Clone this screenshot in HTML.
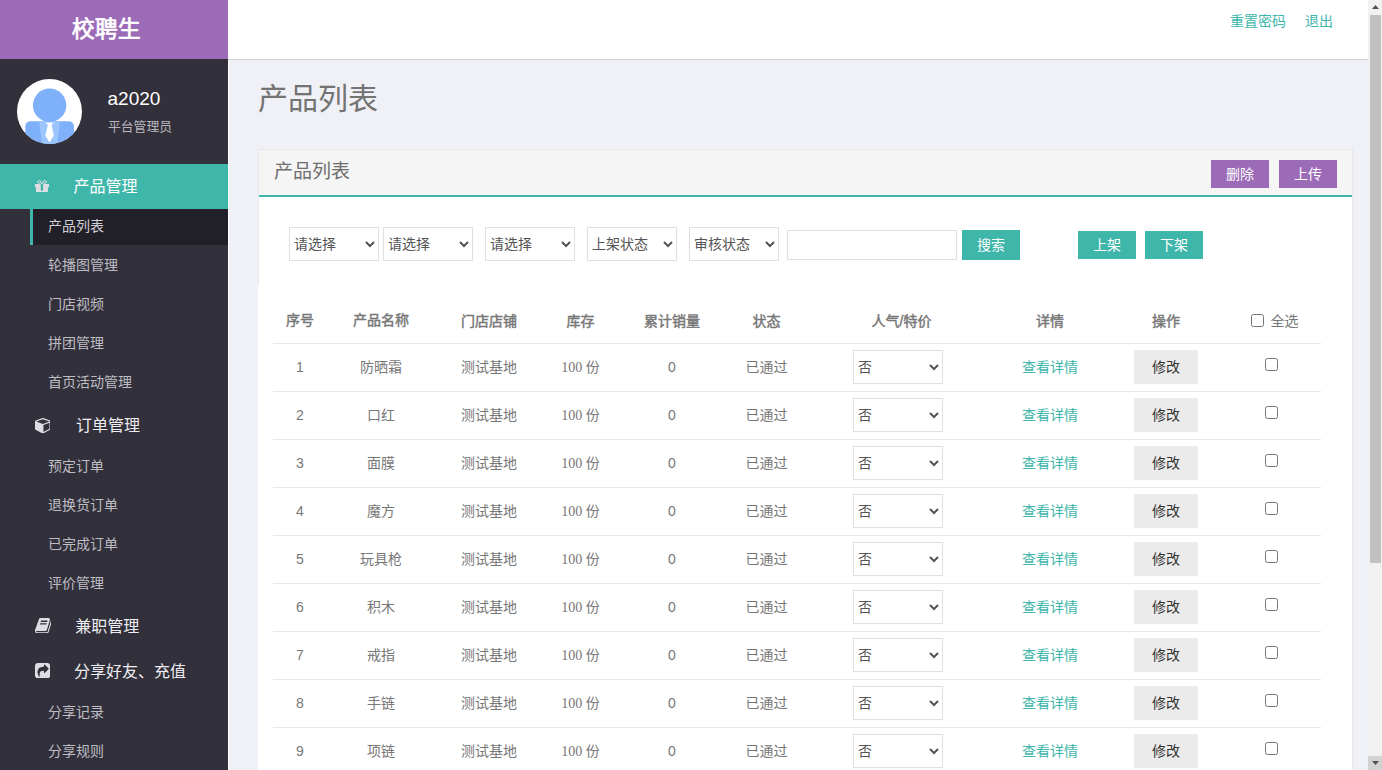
<!DOCTYPE html>
<html lang="zh-CN">
<head>
<meta charset="utf-8">
<title>产品列表</title>
<style>
*{box-sizing:border-box;}
html,body{margin:0;padding:0;width:1382px;height:770px;overflow:hidden;}
body{font-family:"Liberation Sans","Noto Sans CJK SC",sans-serif;font-size:14px;color:#777;background:#f0f1f6;position:relative;}
a{text-decoration:none;color:#3eb6aa;}
select,input{font-family:"Liberation Sans","Noto Sans CJK SC",sans-serif;}
/* sidebar */
#side{position:absolute;left:0;top:0;width:228px;height:770px;background:#32303a;overflow:hidden;}
#logo{height:59px;background:#9b6bb7;color:#fff;font-size:23px;font-weight:normal;-webkit-text-stroke:0.68px #fff;text-align:center;line-height:59px;padding-right:15.4px;}
#user{position:relative;height:105px;}
#avatar{position:absolute;left:17px;top:20px;width:65px;height:65px;}
#uname{position:absolute;left:107.5px;top:29px;font-size:19px;color:#fff;line-height:22px;}
#urole{position:absolute;left:108px;top:60px;font-size:12.8px;color:#b9b8bd;line-height:16px;}
.m1{height:45px;line-height:45px;color:#ededf1;font-size:16px;position:relative;padding-left:73.5px;}
.m1.act{background:#3eb6aa;line-height:45px;color:#fff;}
.m1 .ic{position:absolute;fill:#dedde3;}
.m2{height:36px;line-height:36px;margin-bottom:3px;color:#bebdc4;font-size:14px;padding-left:48px;position:relative;}
.m2.act{background:#211f27;margin-left:30px;padding-left:15px;border-left:3px solid #3eb6aa;color:#cfcfd5;line-height:34px;margin-bottom:2px;}
/* top */
#top{position:absolute;left:228px;top:0;width:1140px;height:60px;background:#fff;border-bottom:1px solid #d2d2d4;}
#top a{position:absolute;top:12px;font-size:14px;line-height:18px;}
/* main */
#title{position:absolute;left:258px;top:77px;font-size:30px;line-height:44px;color:#737373;font-weight:400;}
#panel{position:absolute;left:258px;top:149px;width:1095px;height:640px;background:#fff;border-right:1px solid #e7e7e9;}
#pbl{position:absolute;left:0;top:0;width:1px;height:136px;background:#e7e7e9;}
#phead{height:48px;background:#f5f5f5;border-top:1px solid #e7e7e9;border-bottom:2px solid #3eb6aa;position:relative;margin-left:1px;}
#phead .t{position:absolute;left:15px;top:9px;font-size:19px;line-height:26px;color:#6e6e6e;}
.btn{position:absolute;height:28px;line-height:28px;text-align:center;color:#fff;font-size:14px;}
.pur{background:#9b6bb7;}
.teal{background:#3eb6aa;}
.fs{position:absolute;top:78px;width:90px;height:34px;border:1px solid #e0e0e0;background:#fff;color:#555;font-size:14px;padding:0;border-radius:0;}
#kw{position:absolute;left:529px;top:81px;width:170px;height:30px;border:1px solid #e0e0e0;background:#fff;}
/* table */
#tbl{position:absolute;left:15px;top:150px;width:1048px;}
.th{position:relative;height:44px;font-weight:normal;-webkit-text-stroke:0.45px #777;}
.tr{position:relative;height:48px;border-top:1px solid #e7e7e7;}
.c{position:absolute;top:0;text-align:center;line-height:47px;white-space:nowrap;}
.th .c{line-height:44px;}
.th .c1,.th .c2{top:-1px;}
.c1{left:1px;width:52px}
.c2{left:53px;width:110px}
.c3{left:163px;width:106px}
.c4{left:269px;width:77px}
.tr .c4{font-family:"Liberation Serif","Noto Sans CJK SC",serif;}
.c5{left:346px;width:106px}
.c6{left:452px;width:83px}
.c7{left:535px;width:187px}
.c8{left:722px;width:110px}
.c9{left:832px;width:122px}
.rs{position:absolute;left:580px;top:6px;width:90px;height:34px;border:1px solid #e0e0e0;background:#fff;color:#555;font-size:14px;padding:0;border-radius:0;}
.edit{position:absolute;left:861px;top:6px;width:64px;height:34px;line-height:34px;text-align:center;background:#ebebeb;color:#333;font-size:14px;}
.ck{position:absolute;left:992px;top:14px;width:13px;height:13px;margin:0;}
/* scrollbar */
#sb{position:absolute;left:1368px;top:0;width:14px;height:770px;background:#f1f1f1;}
#sb .th2{position:absolute;left:2px;top:15px;width:11px;height:548px;background:#c1c1c1;}
#sb svg{position:absolute;left:0;}
#sb .dnb{position:absolute;left:0;top:756px;width:14px;height:14px;background:#d2d2d2;}
</style>
</head>
<body>
<div id="side">
  <div id="logo">校聘生</div>
  <div id="user">
    <svg id="avatar" viewBox="0 0 65 65"><defs><clipPath id="cp"><circle cx="32.5" cy="32.5" r="32.5"/></clipPath></defs>
      <circle cx="32.5" cy="32.5" r="32.5" fill="#fff"/>
      <g clip-path="url(#cp)">
        <rect x="8.3" y="42.2" width="48.6" height="30" rx="5" fill="#7eb1f9"/>
        <path d="M22.1 42.2h20.9l-2.8 22.8h-15z" fill="#9cc5fd"/>
        <path d="M28.8 43.4h7.8l-2 2.6 2.2 10.6-4.3 6.8-4.2-6.8 2.6-10.6z" fill="#fff"/>
        <circle cx="32.6" cy="26.3" r="16.7" fill="#7eb1f9"/>
      </g>
    </svg>
    <div id="uname">a2020</div>
    <div id="urole">平台管理员</div>
  </div>
  <div class="m1 act"><svg class="ic" style="left:34px;top:15px" width="16" height="14" viewBox="34 179 16 14"><path d="M34.9 183.9h14.1v3.25h-14.1z M35.95 187.15h11.95v4.9h-11.95z"/><path d="M40.7 184h2.4v6.6h-2.4z" fill="#3eb6aa"/><ellipse cx="39.3" cy="181.9" rx="1.7" ry="1.3" fill="none" stroke="#dedde3" stroke-width="1"/><ellipse cx="44.7" cy="181.9" rx="1.7" ry="1.3" fill="none" stroke="#dedde3" stroke-width="1"/><path d="M40.6 182.7l1.4 1.2 1.4-1.2" fill="none" stroke="#dedde3" stroke-width="1"/></svg>产品管理</div>
  <div class="m2 act">产品列表</div>
  <div class="m2">轮播图管理</div>
  <div class="m2">门店视频</div>
  <div class="m2">拼团管理</div>
  <div class="m2">首页活动管理</div>
  <div class="m1" style="padding-left:76px"><svg class="ic" style="left:34.6px;top:14.7px" width="15.7" height="15.5" viewBox="0 -1408 1664 1664" preserveAspectRatio="none"><path transform="scale(1,-1)" d="M896 -93l640 349v636l-640 -233v-752zM832 772l698 254l-698 254l-698 -254zM1664 1024v-768q0 -35 -18 -65t-49 -47l-704 -384q-28 -16 -61 -16t-61 16l-704 384q-31 17 -49 47t-18 65v768q0 40 23 73t61 47l704 256q22 8 44 8t44 -8l704 -256q38 -14 61 -47t23 -73z"/></svg>订单管理</div>
  <div class="m2">预定订单</div>
  <div class="m2">退换货订单</div>
  <div class="m2">已完成订单</div>
  <div class="m2">评价管理</div>
  <div class="m1" style="padding-left:75.2px"><svg class="ic" style="left:34.8px;top:13.8px" width="16.5" height="15.5" viewBox="-0.5 -1408 1665.3 1536" preserveAspectRatio="none"><path transform="scale(1,-1)" d="M1639 1058q40 -57 18 -129l-275 -906q-19 -64 -76.5 -107.5t-122.5 -43.5h-923q-77 0 -148.5 53.5t-99.5 131.5q-24 67 -2 127q0 4 3 27t4 37q1 8 -3 21.5t-3 19.5q2 11 8 21t16.5 23.5t16.5 23.5q23 38 45 91.5t30 91.5q3 10 0.5 30t-0.5 28q3 11 17 28t17 23q21 36 42 92t25 90q1 9 -2.5 32t0.5 28q4 13 22 30.5t22 22.5q19 26 42.5 84.5t27.5 96.5q1 8 -3 25.5t-2 26.5q2 8 9 18t18 23t17 21q8 12 16.5 30.5t15 35t16 36t19.5 32t26.5 23.5t36 11.5t47.5 -5.5l-1 -3q38 9 51 9h761q74 0 114 -56t18 -130l-274 -906q-36 -119 -71.5 -153.5t-128.5 -34.5h-869q-27 0 -38 -15q-11 -16 -1 -43q24 -70 144 -70h923q29 0 56 15.5t35 41.5l300 987q7 22 5 57q38 -15 59 -43zM575 1056q-4 -13 2 -22.5t20 -9.5h608q13 0 25.5 9.5t16.5 22.5l21 64q4 13 -2 22.5t-20 9.5h-608q-13 0 -25.5 -9.5t-16.5 -22.5zM492 800q-4 -13 2 -22.5t20 -9.5h608q13 0 25.5 9.5t16.5 22.5l21 64q4 13 -2 22.5t-20 9.5h-608q-13 0 -25.5 -9.5t-16.5 -22.5z"/></svg>兼职管理</div>
  <div class="m1" style="padding-left:74px"><svg class="ic" style="left:34.8px;top:13.8px" width="15.2" height="15.4" viewBox="0 -1408 1536 1536" preserveAspectRatio="none"><path transform="scale(1,-1)" d="M1005 435l352 352q19 19 19 45t-19 45l-352 352q-30 31 -69 14q-40 -17 -40 -59v-160q-119 0 -216 -19.5t-162.5 -51t-114 -79t-76.5 -95.5t-44.5 -109t-21.5 -111.5t-5 -110.5q0 -181 167 -404q11 -12 25 -12q7 0 13 3q22 9 19 33q-44 354 62 473q46 52 130 75.5t224 23.5v-160q0 -42 40 -59q12 -5 24 -5q26 0 45 19zM1536 1120v-960q0 -119 -84.5 -203.5t-203.5 -84.5h-960q-119 0 -203.5 84.5t-84.5 203.5v960q0 119 84.5 203.5t203.5 84.5h960q119 0 203.5 -84.5t84.5 -203.5z"/></svg>分享好友、充值</div>
  <div class="m2">分享记录</div>
  <div class="m2">分享规则</div>
</div>
<div id="top">
  <a style="left:1002px">重置密码</a>
  <a style="left:1077px">退出</a>
</div>
<div style="position:absolute;left:228px;top:60px;width:1px;height:710px;background:#fff"></div>
<div id="title">产品列表</div>
<div id="panel">
  <div id="pbl"></div>
  <div id="phead">
    <span class="t">产品列表</span>
    <span class="btn pur" style="left:952px;top:10px;width:58px">删除</span>
    <span class="btn pur" style="left:1020px;top:10px;width:58px">上传</span>
  </div>
  <select class="fs" style="left:31px"><option>请选择</option></select>
  <select class="fs" style="left:125px"><option>请选择</option></select>
  <select class="fs" style="left:227px"><option>请选择</option></select>
  <select class="fs" style="left:329px"><option>上架状态</option></select>
  <select class="fs" style="left:431px"><option>审核状态</option></select>
  <input id="kw" type="text">
  <span class="btn teal" style="left:704px;top:81px;width:58px;height:30px;line-height:30px">搜索</span>
  <span class="btn teal" style="left:820px;top:82px;width:58px">上架</span>
  <span class="btn teal" style="left:887px;top:82px;width:58px">下架</span>
  <div id="tbl">
    <div class="th">
      <span class="c c1">序号</span><span class="c c2">产品名称</span><span class="c c3">门店店铺</span><span class="c c4">库存</span><span class="c c5">累计销量</span><span class="c c6">状态</span><span class="c c7">人气/特价</span><span class="c c8">详情</span><span class="c c9">操作</span>
      <input type="checkbox" class="ck" style="left:978px;top:15px"><span class="c" style="left:997.5px;-webkit-text-stroke:0">全选</span>
    </div>
    <div class="tr">
      <span class="c c1">1</span><span class="c c2">防晒霜</span><span class="c c3">测试基地</span><span class="c c4">100 份</span><span class="c c5">0</span><span class="c c6">已通过</span>
      <select class="rs"><option>否</option><option>是</option></select>
      <a class="c c8">查看详情</a><span class="edit">修改</span><input type="checkbox" class="ck">
    </div>
    <div class="tr">
      <span class="c c1">2</span><span class="c c2">口红</span><span class="c c3">测试基地</span><span class="c c4">100 份</span><span class="c c5">0</span><span class="c c6">已通过</span>
      <select class="rs"><option>否</option><option>是</option></select>
      <a class="c c8">查看详情</a><span class="edit">修改</span><input type="checkbox" class="ck">
    </div>
    <div class="tr">
      <span class="c c1">3</span><span class="c c2">面膜</span><span class="c c3">测试基地</span><span class="c c4">100 份</span><span class="c c5">0</span><span class="c c6">已通过</span>
      <select class="rs"><option>否</option><option>是</option></select>
      <a class="c c8">查看详情</a><span class="edit">修改</span><input type="checkbox" class="ck">
    </div>
    <div class="tr">
      <span class="c c1">4</span><span class="c c2">魔方</span><span class="c c3">测试基地</span><span class="c c4">100 份</span><span class="c c5">0</span><span class="c c6">已通过</span>
      <select class="rs"><option>否</option><option>是</option></select>
      <a class="c c8">查看详情</a><span class="edit">修改</span><input type="checkbox" class="ck">
    </div>
    <div class="tr">
      <span class="c c1">5</span><span class="c c2">玩具枪</span><span class="c c3">测试基地</span><span class="c c4">100 份</span><span class="c c5">0</span><span class="c c6">已通过</span>
      <select class="rs"><option>否</option><option>是</option></select>
      <a class="c c8">查看详情</a><span class="edit">修改</span><input type="checkbox" class="ck">
    </div>
    <div class="tr">
      <span class="c c1">6</span><span class="c c2">积木</span><span class="c c3">测试基地</span><span class="c c4">100 份</span><span class="c c5">0</span><span class="c c6">已通过</span>
      <select class="rs"><option>否</option><option>是</option></select>
      <a class="c c8">查看详情</a><span class="edit">修改</span><input type="checkbox" class="ck">
    </div>
    <div class="tr">
      <span class="c c1">7</span><span class="c c2">戒指</span><span class="c c3">测试基地</span><span class="c c4">100 份</span><span class="c c5">0</span><span class="c c6">已通过</span>
      <select class="rs"><option>否</option><option>是</option></select>
      <a class="c c8">查看详情</a><span class="edit">修改</span><input type="checkbox" class="ck">
    </div>
    <div class="tr">
      <span class="c c1">8</span><span class="c c2">手链</span><span class="c c3">测试基地</span><span class="c c4">100 份</span><span class="c c5">0</span><span class="c c6">已通过</span>
      <select class="rs"><option>否</option><option>是</option></select>
      <a class="c c8">查看详情</a><span class="edit">修改</span><input type="checkbox" class="ck">
    </div>
    <div class="tr">
      <span class="c c1">9</span><span class="c c2">项链</span><span class="c c3">测试基地</span><span class="c c4">100 份</span><span class="c c5">0</span><span class="c c6">已通过</span>
      <select class="rs"><option>否</option><option>是</option></select>
      <a class="c c8">查看详情</a><span class="edit">修改</span><input type="checkbox" class="ck">
    </div>
  </div>
</div>
<div id="sb"><svg style="top:0" width="14" height="15" viewBox="0 0 14 15"><path d="M4 9L7.5 5 11 9z" fill="#505050"/></svg><div class="th2"></div><div class="dnb"></div><svg style="top:755px" width="14" height="15" viewBox="0 0 14 15"><path d="M4 6L7.5 10 11 6z" fill="#505050"/></svg></div>
</body>
</html>
